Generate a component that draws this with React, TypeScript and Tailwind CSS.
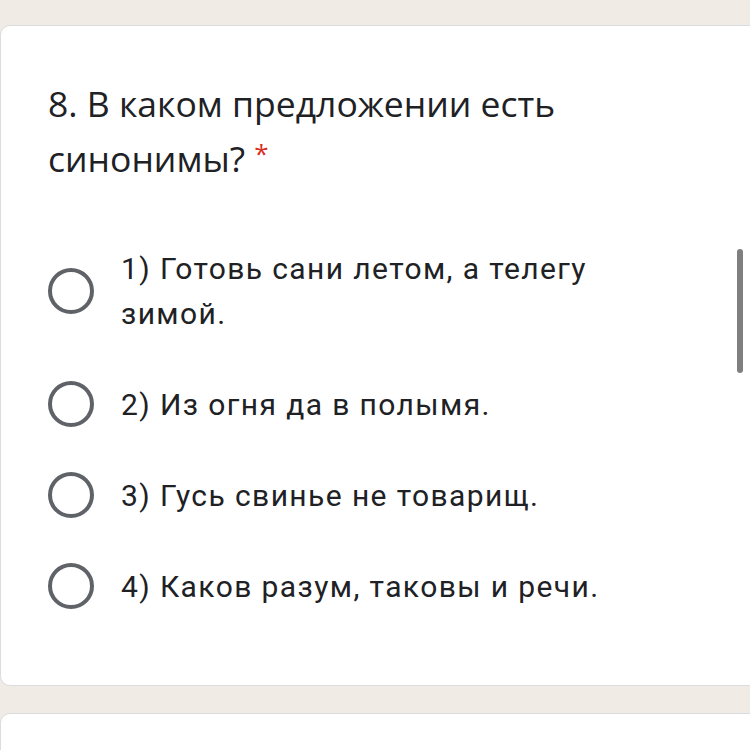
import React, { useState } from "react";

const options = [
  "1) Готовь сани летом, а телегу зимой.",
  "2) Из огня да в полымя.",
  "3) Гусь свинье не товарищ.",
  "4) Каков разум, таковы и речи.",
];

const Radio = ({ checked }: { checked: boolean }) => (
  <span className="flex h-[46px] w-[46px] shrink-0 items-center justify-center rounded-full border-[4px] border-[#5f6368]">
    {checked && <span className="h-[22px] w-[22px] rounded-full bg-[#673ab7]" />}
  </span>
);

const App = () => {
  const [picked, setPicked] = useState(-1);

  return (
    <div className="relative h-[750px] w-[750px] overflow-hidden bg-[#f0ebe4]">
      <div className="mt-[25px] mr-[-20px] h-[661px] rounded-[10px] border border-[#dadce0] bg-white pt-[50px] pl-[47px]">
        <div
          className="w-[600px] text-[35.5px] leading-[55px] text-[#202124]"
          style={{ fontFamily: '"Open Sans", sans-serif' }}
        >
          8. В каком предложении есть синонимы?{" "}
          <span className="inline-block align-[9px] text-[26px] leading-none text-[#d93025]">*</span>
        </div>

        <div
          className="mt-[60px] flex flex-col gap-[45px]"
          style={{ fontFamily: "Roboto, sans-serif" }}
        >
          {options.map((opt, i) => (
            <label
              key={i}
              className="flex cursor-pointer items-center gap-[27px]"
              onClick={() => setPicked(i)}
            >
              <Radio checked={picked === i} />
              <span className="w-[540px] text-[30px] leading-[45px] tracking-[1.4px] text-[#202124]">
                {opt}
              </span>
            </label>
          ))}
        </div>
      </div>

      <div className="mt-[27px] mr-[-20px] h-[60px] rounded-[10px] border border-[#dadce0] bg-white" />

      {/* scroll indicator */}
      <div className="absolute top-[249px] left-[737px] h-[124px] w-[6px] rounded-full bg-[#7f7f7f]" />
    </div>
  );
};

export default App;
